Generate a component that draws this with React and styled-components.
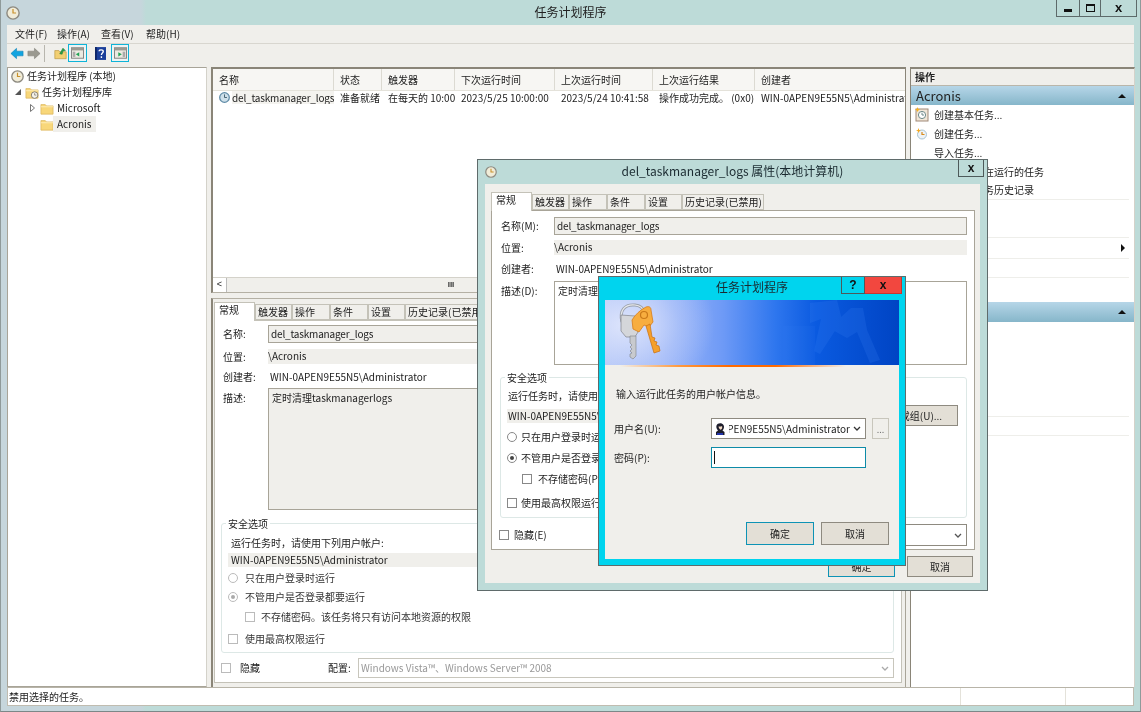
import React from 'react';
import styled, { createGlobalStyle } from 'styled-components';

const Global = createGlobalStyle`
  html, body { margin: 0; padding: 0; background: #bfdad9; }
  * { box-sizing: border-box; }
  #root { width: 1141px; height: 712px; overflow: hidden; }
`;

const Screen = styled.div`
  position: relative;
  width: 1141px;
  height: 712px;
  background: linear-gradient(90deg, #c6d6dc 0, #c6d6dc 140px, #bddbd8 145px, #bddbd8 100%);
  font-family: "Noto Sans CJK SC", "Noto Sans", sans-serif;
  font-size: 10px;
  line-height: 14px;
  color: #222;
  border-left: 1px solid #8f9a9a;
  border-right: 1px solid #8f9a9a;
  border-bottom: 1px solid #7c8888;
  display: flex;
  flex-direction: column;
  padding: 0 6px 5px;
  filter: blur(0.4px);
`;

const MainTitle = styled.div`
  height: 25px;
  margin: 0 -1px;
  display: flex;
  align-items: flex-start;
  position: relative;
`;
const TitleIcon = styled.span`
  display: flex;
  margin: 6px 0 0 0;
`;
const MainTitleText = styled.div`
  position: absolute;
  left: 0;
  right: 0;
  top: 5px;
  text-align: center;
  font-size: 12px;
  color: #222;
`;
const WinBtns = styled.div`
  margin-left: auto;
  display: flex;
  height: 17px;
  margin-right: -2px;
  border: 1px solid #5d6a6a;
  border-top: none;
`;
const WinBtn = styled.div`
  width: ${p => p.$w}px;
  display: flex;
  align-items: center;
  justify-content: center;
  border-left: ${p => (p.$first ? 'none' : '1px solid #5d6a6a')};
  font-weight: 700;
  font-family: "Liberation Sans", sans-serif;
  font-size: 13px;
  color: #111;
`;
const MinGlyph = styled.i`
  display: block;
  width: 8px;
  height: 3px;
  background: #111;
  margin-top: 4px;
`;
const MaxGlyph = styled.i`
  display: block;
  width: 9px;
  height: 8px;
  border: 1px solid #111;
  border-top-width: 2px;
`;

const MenuBar = styled.div`
  height: 19px;
  background: #f0efeb;
  display: flex;
  align-items: center;
  padding-left: 8px;
  border-bottom: 1px solid #d8d6cf;
`;
const MenuItem = styled.span`
  width: ${p => p.$w}px;
  flex: none;
  font-size: 10px;
`;
const Toolbar = styled.div`
  height: 22px;
  background: #f0efeb;
  display: flex;
  align-items: center;
  padding: 0 0 4px 3px;
`;
const ToolSep = styled.i`
  width: 1px;
  height: 17px;
  background: #b8b6ae;
  margin: 0 9px 0 3px;
`;
const ToolBtn = styled.span`
  width: ${p => p.$w || 20}px;
  height: 18px;
  display: flex;
  align-items: center;
  justify-content: center;
  margin-left: ${p => p.$ml || 0}px;
  ${p => p.$on && 'border: 1px solid #0fb4d8; background: #eef3f3;'}
`;

const Workspace = styled.div`
  flex: 1;
  min-height: 0;
  display: flex;
  background: #f0efeb;
  padding-top: 1px;
`;
const TreePane = styled.div`
  width: 200px;
  background: #fff;
  border: 1px solid #a8a498;
  border-right: 1px solid #d4d2ca;
  flex: none;
`;
const TreeRow = styled.div`
  height: 16px;
  display: flex;
  align-items: center;
  padding-left: ${p => p.$indent}px;
  gap: 3px;
`;
const TreeLabel = styled.span`
  ${p => p.$sel && 'background:#f0efeb; padding: 1px 4px; margin-left:-4px;'}
`;
const Expander = styled.span`
  width: 7px;
  display: flex;
  flex: none;
`;
const CenterPane = styled.div`
  width: 695px;
  margin-left: 4px;
  flex: none;
  display: flex;
  flex-direction: column;
`;
const ListPane = styled.div`
  height: 226px;
  flex: none;
  background: #fff;
  border: 2px solid #8a8578;
  border-right: 1px solid #8a8578;
  border-bottom: 1px solid #b4b0a4;
  display: flex;
  flex-direction: column;
  overflow: hidden;
`;
const ListHeader = styled.div`
  display: flex;
  height: 22px;
  flex: none;
  background: #f7f6f3;
  border-bottom: 1px solid #e4e2da;
`;
const ListCell = styled.div`
  width: ${p => p.$w}px;
  flex: none;
  padding-left: ${p => p.$pl ?? 6}px;
  border-right: ${p => (p.$head ? '1px solid #dcdad2' : 'none')};
  white-space: nowrap;
  display: flex;
  align-items: center;
  gap: 2px;
  overflow: hidden;
`;
const TaskName = styled.span`
  letter-spacing: -0.18px;
  background: ${p => p.$bg || 'transparent'};
`;
const ListRow = styled.div`
  display: flex;
  height: 13px;
`;
const ListFill = styled.div`
  flex: 1;
`;
const HScroll = styled.div`
  height: 15px;
  flex: none;
  background: #f7f6f3;
  display: flex;
  align-items: center;
  border-top: 1px solid #d4d2ca;
`;
const ScrollEnd = styled.div`
  width: 14px;
  height: 14px;
  background: #fff;
  border-right: 1px solid #bbb;
  text-align: center;
  font-size: 9px;
  line-height: 13px;
  font-family: "Liberation Sans", sans-serif;
`;
const ScrollThumb = styled.div`
  width: 448px;
  height: 14px;
  background: #f0efeb;
  text-align: center;
  font-size: 8px;
  line-height: 13px;
  color: #333;
  font-family: "Liberation Sans", sans-serif;
  font-weight: 700;
`;
const Splitter = styled.div`
  height: 5px;
  flex: none;
  background: #f0efeb;
`;
const DetailPane = styled.div`
  flex: 1;
  min-height: 0;
  border-left: 2px solid #8a8578;
  border-top: 1px solid #b4b0a4;
  border-right: 1px solid #a8a498;
  background: #f0efeb;
  padding: 3px 3px 4px 1px;
  display: flex;
  flex-direction: column;
`;

const Tabs = styled.div`
  display: flex;
  height: 18px;
  flex: none;
  align-items: flex-end;
  position: relative;
  z-index: 1;
`;
const Tab = styled.div`
  width: ${p => p.$w}px;
  flex: none;
  height: ${p => (p.$on ? 19 : 16)}px;
  margin-bottom: ${p => (p.$on ? -1 : 0)}px;
  padding-left: ${p => (p.$on ? 4 : 2)}px;
  background: ${p => (p.$on ? '#fff' : '#f0efeb')};
  border: 1px solid #c4c2b8;
  border-bottom: ${p => (p.$on ? 'none' : '1px solid #c4c2b8')};
  white-space: nowrap;
  overflow: hidden;
`;
const TabPanel = styled.div`
  flex: 1;
  min-height: 0;
  padding: 4px 7px 0 8px;
  background: #fff;
  border: 1px solid #c4c2b8;
`;
const FieldRow = styled.div`
  display: flex;
  align-items: ${p => (p.$top ? 'flex-start' : 'center')};
  height: ${p => p.$h}px;
  margin-top: ${p => p.$mt || 0}px;
`;
const FieldLabel = styled.div`
  width: ${p => p.$w}px;
  flex: none;
  ${p => p.$pt && `padding-top:${p.$pt}px;`}
`;
const TextInput = styled.div`
  flex: 1;
  align-self: stretch;
  background: #f0efeb;
  border: 1px solid #a8a498;
  padding-left: 2px;
  display: flex;
  align-items: center;
`;
const ReadBox = styled.div`
  flex: 1;
  align-self: stretch;
  background: #f0efeb;
  display: flex;
  align-items: center;
  padding-bottom: 1px;
`;
const PlainValue = styled.div`
  padding-left: 2px;
`;
const MultiBox = styled.div`
  flex: 1;
  align-self: stretch;
  background: ${p => p.$bg || '#f0efeb'};
  border: 1px solid #a8a498;
  padding: 2px 3px;
`;
const Group = styled.div`
  position: relative;
  border: 1px solid #dde8e6;
  border-radius: 3px;
  margin: ${p => p.$mt}px 0 0 ${p => p.$ml}px;
  height: ${p => p.$h}px;
  padding: ${p => p.$pt}px 8px 0 6px;
`;
const Legend = styled.span`
  position: absolute;
  left: 4px;
  top: -7px;
  background: #fff;
  padding: 0 2px;
`;
const GroupLine = styled.div`
  height: 14px;
  margin-top: ${p => p.$mt || 0}px;
  display: flex;
  align-items: center;
  gap: ${p => p.$gap || 6}px;
  padding-left: ${p => p.$pl || 0}px;
  color: ${p => (p.$muted ? '#333' : 'inherit')};
`;
const GrayBand = styled.div`
  height: 14px;
  margin-top: ${p => p.$mt}px;
  background: #f0efeb;
  display: flex;
  align-items: center;
  padding-left: ${p => p.$pl}px;
`;
const Radio = styled.i`
  width: 10px;
  height: 10px;
  border-radius: 50%;
  flex: none;
  border: 1px solid ${p => p.$c || '#bbb'};
  background: #fff;
  display: flex;
  align-items: center;
  justify-content: center;
  &::after {
    content: '';
    display: ${p => (p.$on ? 'block' : 'none')};
    width: 4px;
    height: 4px;
    border-radius: 50%;
    background: ${p => p.$dot || '#aaa'};
  }
`;
const Check = styled.i`
  width: 10px;
  height: 10px;
  flex: none;
  border: 1px solid ${p => p.$c || '#bbb'};
  background: #fff;
`;
const FooterRow = styled.div`
  display: flex;
  align-items: center;
  height: ${p => p.$h}px;
  margin: ${p => p.$mt}px 0 0 ${p => p.$ml}px;
`;
const FooterText = styled.span`
  flex: none;
  width: ${p => p.$w}px;
  margin-left: ${p => p.$ml || 0}px;
  white-space: nowrap;
`;
const Select = styled.div`
  flex: 1;
  height: 100%;
  background: #fff;
  border: 1px solid ${p => p.$c || '#c8c6bc'};
  color: ${p => p.$tc || '#999'};
  display: flex;
  align-items: center;
  padding: 0 4px 0 2px;
  justify-content: space-between;
  overflow: hidden;
  white-space: nowrap;
`;

const ActionsPane = styled.div`
  width: 225px;
  margin-left: 4px;
  flex: none;
  background: #fff;
  border-left: 1px solid #8a8578;
  border-top: 2px solid #8a8578;
  border-right: 1px solid #d4d2ca;
  display: flex;
  flex-direction: column;
`;
const ActionsTitle = styled.div`
  height: 17px;
  background: #f0efeb;
  border-bottom: 1px solid #bab6aa;
  padding: 1px 0 0 4px;
  font-weight: 700;
  flex: none;
`;
const SectionHead = styled.div`
  height: ${p => p.$h}px;
  flex: none;
  margin-top: ${p => p.$mt || 0}px;
  background: linear-gradient(180deg, #b6d6e8, #86b6ca);
  padding: 0 8px 0 5px;
  display: flex;
  align-items: center;
  justify-content: space-between;
  font-size: 13px;
  color: #222;
`;
const ActionRow = styled.div`
  height: ${p => p.$h || 19}px;
  flex: none;
  display: flex;
  align-items: center;
  padding-left: 23px;
  position: relative;
  ${p => p.$sep && 'border-bottom: 1px solid #eeeeea; margin-right: 5px;'}
`;
const ActionIcon = styled.span`
  position: absolute;
  left: 4px;
  top: 2px;
  display: flex;
`;
const RowArrow = styled.i`
  position: absolute;
  right: 4px;
  top: 6px;
  border-left: 4px solid #111;
  border-top: 4px solid transparent;
  border-bottom: 4px solid transparent;
`;
const UpArrow = styled.i`
  border-bottom: 4px solid #111;
  border-left: 4px solid transparent;
  border-right: 4px solid transparent;
`;

const StatusBar = styled.div`
  height: 19px;
  flex: none;
  background: #fff;
  border: 1px solid #c0bcb0;
  border-top: 1px solid #b8b4a8;
  display: flex;
  align-items: center;
`;
const StatusCell = styled.div`
  height: 100%;
  padding-left: 1px;
  width: ${p => p.$w}px;
  flex: ${p => (p.$w ? 'none' : 1)};
  border-right: ${p => (p.$last ? 'none' : '1px solid #e4e2da')};
  display: flex;
  align-items: center;
`;

/* floating windows */
const Dialog = styled.div`
  position: absolute;
  z-index: 2;
  left: ${p => p.$x}px;
  top: ${p => p.$y}px;
  width: ${p => p.$w}px;
  height: ${p => p.$h}px;
  background: ${p => p.$frame};
  border: 1px solid #5f6b6b;
  display: flex;
  flex-direction: column;
  padding: 0 ${p => p.$pad}px ${p => p.$pad}px;
`;
const DialogTitle = styled.div`
  height: ${p => p.$h}px;
  flex: none;
  position: relative;
  display: flex;
  margin: 0 -${p => p.$pad}px;
  padding-left: ${p => p.$il || 0}px;
`;
const DialogTitleText = styled.div`
  position: absolute;
  left: 0;
  right: 0;
  top: ${p => p.$t}px;
  text-align: center;
  font-size: 12px;
  line-height: 16px;
  color: #1a2a30;
`;
const DialogBtns = styled.div`
  margin-left: auto;
  margin-right: ${p => p.$mr}px;
  display: flex;
  height: 17px;
  position: relative;
`;
const DlgBtn = styled.div`
  width: ${p => p.$w}px;
  display: flex;
  align-items: center;
  justify-content: center;
  background: ${p => p.$bg || 'transparent'};
  border: 1px solid ${p => p.$bc || '#4d5a5a'};
  border-top: none;
  border-left: ${p => (p.$nl ? 'none' : `1px solid ${p.$bc || '#4d5a5a'}`)};
  font-family: "Liberation Sans", sans-serif;
  font-weight: 700;
  font-size: 12px;
  color: #111;
`;
const DialogBody = styled.div`
  flex: 1;
  min-height: 0;
  background: #f0efeb;
  display: flex;
  flex-direction: column;
  padding: ${p => p.$pad || 0};
`;
const PropTabPanel = styled.div`
  height: 340px;
  background: #fff;
  border: 1px solid #a8a498;
  padding: 6px 7px 0 9px;
  margin-right: 5px;
  flex: none;
`;
const PushRow = styled.div`
  display: flex;
  justify-content: flex-end;
  gap: ${p => p.$gap}px;
  margin-top: ${p => p.$mt}px;
  padding-right: ${p => p.$pr}px;
`;
const PushBtn = styled.div`
  width: ${p => p.$w}px;
  height: ${p => p.$h}px;
  display: flex;
  align-items: center;
  justify-content: center;
  background: #e3dfd6;
  border: 1px solid ${p => (p.$def ? '#0d93b5' : '#8e8a80')};
  white-space: nowrap;
`;
const ChangeUserBtn = styled(PushBtn)`
  position: absolute;
  right: 8px;
  top: 27px;
`;
const Banner = styled.div`
  height: 65px;
  flex: none;
  position: relative;
  overflow: hidden;
  background:
    radial-gradient(ellipse 90px 70px at 20px 25px, rgba(226,232,252,0.9) 0%, rgba(200,214,250,0.4) 60%, rgba(160,185,250,0) 100%),
    linear-gradient(90deg, #b4c6f7 0%, #a2b9f8 18%, #6e9af6 40%, #2e76ee 58%, #0a5ae0 72%, #0044c4 100%);
`;
const BannerArt = styled.svg`
  position: absolute;
  left: 0;
  top: 0;
`;
const OrangeLine = styled.div`
  height: 2px;
  flex: none;
  background: linear-gradient(90deg, #f0efeb 5%, #ff9a40 25%, #ff6a00 42%, #ff6a00 58%, #f0efeb 82%);
`;
const CredText = styled.div`
  margin: 20px 0 0 11px;
  height: 14px;
`;
const CredRow = styled.div`
  display: flex;
  align-items: center;
  margin: ${p => p.$mt}px 0 0 9px;
  height: 21px;
`;
const CredLabel = styled.div`
  width: 97px;
  flex: none;
`;
const Combo = styled.div`
  width: 155px;
  height: 21px;
  background: #fff;
  border: 1px solid #8e8a80;
  display: flex;
  align-items: center;
  padding-left: 2px;
  gap: 3px;
  overflow: hidden;
`;
const ComboClip = styled.div`
  width: 121px;
  flex: none;
  overflow: hidden;
  display: flex;
  justify-content: flex-end;
  white-space: nowrap;
  color: #222;
`;
const Ellipsis = styled.div`
  width: 17px;
  height: 21px;
  margin-left: 6px;
  border: 1px solid #c8c6bc;
  background: #f0efeb;
  text-align: center;
  line-height: 22px;
  color: #777;
  font-size: 9px;
`;
const PasswordInput = styled.div`
  width: 155px;
  height: 21px;
  background: #fff;
  border: 1px solid #0d8ba8;
  display: flex;
  align-items: center;
  padding-left: 2px;
`;
const Caret = styled.i`
  width: 1px;
  height: 13px;
  background: #111;
`;
const ToolGap = styled.span`
  width: 3px;
`;

const Clock = ({ s = 14, ring = '#8d8a80' }) => (
  <svg width={s} height={s} viewBox="0 0 16 16">
    <circle cx="8" cy="8" r="7" fill="#f1ecd8" stroke={ring} strokeWidth="1.6" />
    <path d="M8 3.5V8h3.5" fill="none" stroke="#c9902a" strokeWidth="1.4" />
  </svg>
);
const BlueClock = () => (
  <svg width="11" height="11" viewBox="0 0 16 16" style={{ flex: 'none' }}>
    <circle cx="8" cy="8" r="7" fill="#cfe0ea" stroke="#5e8aa6" strokeWidth="1.8" />
    <path d="M8 3.5V8h3.5" fill="none" stroke="#44606f" strokeWidth="1.4" />
  </svg>
);
const Folder = ({ clock }) => (
  <svg width="14" height="13" viewBox="0 0 16 15">
    <path d="M1 3h5l1.5 1.5H15V14H1z" fill="#f8d77a" stroke="#d9b35c" strokeWidth="0.8" />
    <path d="M1 5.5h14" stroke="#fff0bf" strokeWidth="1" />
    {clock && <circle cx="11" cy="10.5" r="3.8" fill="#f4f2ea" stroke="#77736a" strokeWidth="1" />}
    {clock && <path d="M11 8.3v2.2h2" stroke="#77736a" strokeWidth="0.8" fill="none" />}
  </svg>
);
const BackArrow = () => (
  <svg width="14" height="13" viewBox="0 0 15 13">
    <path d="M1 6.5 7 1v3h7v5H7v3z" fill="#12a4e0" stroke="#0c7fb4" strokeWidth="0.6" />
  </svg>
);
const FwdArrow = () => (
  <svg width="14" height="13" viewBox="0 0 15 13">
    <path d="M14 6.5 8 1v3H1v5h7v3z" fill="#9a9990" stroke="#7d7c74" strokeWidth="0.6" />
  </svg>
);
const UpFolder = () => (
  <svg width="13" height="14" viewBox="0 0 16 16">
    <path d="M1 5h5l1 1.5h8V15H1z" fill="#f2cf72" stroke="#b89440" strokeWidth="0.8" />
    <path d="M7 9 11 2l3 3-3 .5-1 4z" fill="#28a24a" stroke="#17722f" strokeWidth="0.6" />
  </svg>
);
const PaneIcon = ({ right }) => (
  <svg width="13" height="12" viewBox="0 0 15 13">
    <rect x="0.5" y="0.5" width="14" height="12" fill="#eceae2" stroke="#777" />
    <rect x="0.5" y="0.5" width="14" height="3" fill="#9b9a92" />
    <rect x={right ? 10 : 2} y="5" width="3" height="6" fill="#aaa" />
    <path d={right ? 'M5 5.5 9 8 5 10.5z' : 'M9.5 5.5 5.5 8l4 2.5z'} fill="#23a455" />
  </svg>
);
const HelpBook = () => (
  <svg width="11" height="13" viewBox="0 0 12 14">
    <rect width="12" height="14" fill="#1b3f9a" />
    <rect width="2" height="14" fill="#0d2566" />
    <path d="M4.500 4.500C4.500 2.500 9 2.500 9 4.800 9 6.500 7 6.500 7 8.500M7 10v2" fill="none" stroke="#fff" strokeWidth="1.500" />
  </svg>
);
const NewBasic = () => (
  <svg width="14" height="15" viewBox="0 0 14 15">
    <rect x="1" y="2" width="12" height="12" fill="#f1e6d8" stroke="#a08a78" />
    <circle cx="7" cy="8" r="3.6" fill="#fff" stroke="#6f8a8a" />
    <path d="M7 5.7V8h2" stroke="#6f8a8a" fill="none" />
    <path d="M2.500 0 3.300 2 5 2.600 3.300 3.400 2.500 5 1.800 3.400 0 2.600 1.800 2z" fill="#f6b11e" />
  </svg>
);
const NewTask = () => (
  <svg width="13" height="14" viewBox="0 0 13 14">
    <circle cx="7" cy="8.500" r="4.500" fill="#eef3f6" stroke="#a8c4d4" />
    <path d="M7 6v2.500h2.500" stroke="#d98a18" fill="none" strokeWidth="1.200" />
    <path d="M3.500 2 4.200 4 6 4.600 4.200 5.200 3.500 7 2.800 5.200 1 4.600 2.800 4z" fill="#f6a91e" />
  </svg>
);
const UserGlyph = () => (
  <svg width="12" height="14" viewBox="0 0 12 14" style={{ flex: 'none' }}>
    <path d="M2 13V10l2-1.500C2.500 7 2 5 2.500 3.500 3.500.8 8 .5 9.500 3c1 1.600.5 4-1 5.500l2 1.500V13z" fill="#1d1d2b" />
    <path d="M4.500 4.500c1.500.3 3 0 3.500-.6.5 1.500.2 3-1.200 3.800-1.300-.4-2.100-1.800-2.300-3.200z" fill="#f3ddc8" />
    <rect x="3" y="11" width="6" height="2" fill="#2233aa" />
  </svg>
);
const Chevron = ({ c = '#555' }) => (
  <svg width="8" height="5" viewBox="0 0 8 5"><path d="M1 1l3 3 3-3" fill="none" stroke={c} strokeWidth="1.300" /></svg>
);
const KeysArt = () => (
  <BannerArt width="295" height="65" viewBox="0 0 295 65">
    <g fill="#3b82f4" opacity="0.2">
      <path d="M205 3 232 0l5 20-22 34-6-3 7-32-11 4z" />
      <path d="M224 28 246 8h12l4 22 13 30-10 3-13-31-10 6z" />
      <path d="M178 26h32v39h-32z" opacity="0.45" />
    </g>
    <g>
      <path d="M17 22C14 10 20 4 30 5c5 .5 8 3 9 7" fill="none" stroke="#9aa0aa" strokeWidth="3" />
      <path d="M17 22C14 10 20 4 30 5c5 .5 8 3 9 7" fill="none" stroke="#e6e8ec" strokeWidth="1.200" />
      <path d="M16 15l14 1 3 16-3 5h-9l-5-6z" fill="#d4d6da" stroke="#808389" strokeWidth="0.700" />
      <path d="M25 36h6v20l-3 3-3-2v-3l2-1-2-2 2-2-2-2 2-2-2-2z" fill="#c8cace" stroke="#7c7f84" strokeWidth="0.600" />
      <path d="M27 20c3-5 8-10 14-13 3-1 5 0 5 3l2 12-4 5-5-2-5 7-6-3z" fill="#f7ad3f" stroke="#d87c18" strokeWidth="0.800" />
      <circle cx="39" cy="15" r="3.500" fill="none" stroke="#c97818" strokeWidth="1.200" />
      <path d="M41 26l8 27 6-2-1-5-3-1 1-3-3-1 1-3-3-1-2-13z" fill="#f5a02a" stroke="#c86e10" strokeWidth="0.700" />
    </g>
  </BannerArt>
);

const SecurityLines = ({ hint, check, muted, c, dot, gaps, bandMt, bandPl, firstPl, radioGap, checkPl }) => (
  <>
    <GroupLine $pl={firstPl} $gap={6}>运行任务时，请使用下列用户帐户:</GroupLine>
    <GrayBand $mt={bandMt} $pl={bandPl}>WIN-0APEN9E55N5\Administrator</GrayBand>
    <GroupLine $mt={gaps[0]} $gap={radioGap} $muted={muted}><Radio $c={c} />只在用户登录时运行</GroupLine>
    <GroupLine $mt={gaps[1]} $gap={radioGap} $muted={muted}><Radio $c={c} $on $dot={dot} />不管用户是否登录都要运行</GroupLine>
    <GroupLine $mt={gaps[2]} $pl={checkPl} $muted={muted}><Check $c={c} />{hint}</GroupLine>
    <GroupLine $mt={gaps[3]} $gap={radioGap} $muted={muted}><Check $c={c} />{check}</GroupLine>
  </>
);

const TabStrip = () => (
  <Tabs>
    <Tab $on $w={41}>常规</Tab>
    <Tab $w={37}>触发器</Tab>
    <Tab $w={38}>操作</Tab>
    <Tab $w={38}>条件</Tab>
    <Tab $w={37}>设置</Tab>
    <Tab $w={82}>历史记录(已禁用)</Tab>
  </Tabs>
);

const actionsA = [
  { t: '创建基本任务...', i: <NewBasic /> },
  { t: '创建任务...', i: <NewTask /> },
  { t: '导入任务...' },
  { t: '显示所有正在运行的任务' },
  { t: '启用所有任务历史记录', sep: true },
  { t: '新文件夹...' },
  { t: '删除文件夹', sep: true },
  { t: '查看', arrow: true, sep: true, h: 21 },
  { t: '刷新', sep: true },
  { t: '帮助' },
];
const actionsB = [
  { t: '运行' }, { t: '结束' }, { t: '禁用' }, { t: '导出...' },
  { t: '属性', sep: true }, { t: '删除', sep: true }, { t: '帮助' },
];

export default function App() {
  return (
    <>
      <Global />
      <Screen>
        <MainTitle>
          <TitleIcon><Clock s={14} /></TitleIcon>
          <MainTitleText>任务计划程序</MainTitleText>
          <WinBtns>
            <WinBtn $first $w={22}><MinGlyph /></WinBtn>
            <WinBtn $w={21}><MaxGlyph /></WinBtn>
            <WinBtn $w={36}>x</WinBtn>
          </WinBtns>
        </MainTitle>
        <MenuBar>
          <MenuItem $w={42}>文件(F)</MenuItem>
          <MenuItem $w={44}>操作(A)</MenuItem>
          <MenuItem $w={45}>查看(V)</MenuItem>
          <MenuItem $w={40}>帮助(H)</MenuItem>
        </MenuBar>
        <Toolbar>
          <BackArrow />
          <ToolGap />
          <FwdArrow />
          <ToolSep />
          <ToolBtn $w={13}><UpFolder /></ToolBtn>
          <ToolBtn $on $w={19} $ml={1}><PaneIcon /></ToolBtn>
          <ToolBtn $w={11} $ml={8}><HelpBook /></ToolBtn>
          <ToolBtn $on $w={18} $ml={5}><PaneIcon right /></ToolBtn>
        </Toolbar>
        <Workspace>
          <TreePane>
            <TreeRow $indent={3}><Clock s={13} /><span>任务计划程序 (本地)</span></TreeRow>
            <TreeRow $indent={7}>
              <Expander><svg width="6" height="6" viewBox="0 0 6 6"><path d="M6 0v6H0z" fill="#555" /></svg></Expander>
              <Folder clock /><span>任务计划程序库</span>
            </TreeRow>
            <TreeRow $indent={22}>
              <Expander><svg width="5" height="8" viewBox="0 0 5 8"><path d="M.5.500 4.500 4 .5 7.500z" fill="#fff" stroke="#777" /></svg></Expander>
              <Folder /><span>Microsoft</span>
            </TreeRow>
            <TreeRow $indent={32}><Folder /><TreeLabel $sel>Acronis</TreeLabel></TreeRow>
          </TreePane>
          <CenterPane>
            <ListPane>
              <ListHeader>
                <ListCell $head $w={121}>名称</ListCell>
                <ListCell $head $w={48}>状态</ListCell>
                <ListCell $head $w={73}>触发器</ListCell>
                <ListCell $head $w={100}>下次运行时间</ListCell>
                <ListCell $head $w={98}>上次运行时间</ListCell>
                <ListCell $head $w={102}>上次运行结果</ListCell>
                <ListCell $w={150}>创建者</ListCell>
              </ListHeader>
              <ListRow>
                <ListCell $w={121}><BlueClock /><TaskName $bg="#f4f3ef">del_taskmanager_logs</TaskName></ListCell>
                <ListCell $w={48}>准备就绪</ListCell>
                <ListCell $w={73}>在每天的 10:00</ListCell>
                <ListCell $w={100}>2023/5/25 10:00:00</ListCell>
                <ListCell $w={98}>2023/5/24 10:41:58</ListCell>
                <ListCell $w={102}>操作成功完成。 (0x0)</ListCell>
                <ListCell $w={150}>WIN-0APEN9E55N5\Administrator</ListCell>
              </ListRow>
              <ListFill />
              <HScroll>
                <ScrollEnd>&lt;</ScrollEnd>
                <ScrollThumb>III</ScrollThumb>
              </HScroll>
            </ListPane>
            <Splitter />
            <DetailPane>
              <TabStrip />
              <TabPanel>
                <FieldRow $h={18}>
                  <FieldLabel $w={45}>名称:</FieldLabel>
                  <TextInput><TaskName>del_taskmanager_logs</TaskName></TextInput>
                </FieldRow>
                <FieldRow $h={15} $mt={6}>
                  <FieldLabel $w={45}>位置:</FieldLabel>
                  <ReadBox>\Acronis</ReadBox>
                </FieldRow>
                <FieldRow $h={14} $mt={6}>
                  <FieldLabel $w={45}>创建者:</FieldLabel>
                  <PlainValue>WIN-0APEN9E55N5\Administrator</PlainValue>
                </FieldRow>
                <FieldRow $h={122} $mt={4} $top>
                  <FieldLabel $w={45} $pt={3}>描述:</FieldLabel>
                  <MultiBox>定时清理taskmanagerlogs</MultiBox>
                </FieldRow>
                <Group $mt={13} $ml={-2} $h={130} $pt={12}>
                  <Legend>安全选项</Legend>
                  <SecurityLines
                    muted
                    firstPl={3}
                    bandMt={3}
                    bandPl={3}
                    radioGap={7}
                    checkPl={17}
                    gaps={[4, 5, 6, 8]}
                    hint="不存储密码。该任务将只有访问本地资源的权限"
                    check="使用最高权限运行"
                  />
                </Group>
                <FooterRow $h={20} $mt={5} $ml={-2}>
                  <Check />
                  <FooterText $ml={9} $w={88}>隐藏</FooterText>
                  <FooterText $w={30}>配置:</FooterText>
                  <Select>Windows Vista™、Windows Server™ 2008<Chevron c="#aaa" /></Select>
                </FooterRow>
              </TabPanel>
            </DetailPane>
          </CenterPane>
          <ActionsPane>
            <ActionsTitle>操作</ActionsTitle>
            <SectionHead $h={19}>Acronis<UpArrow /></SectionHead>
            {actionsA.map(a => (
              <ActionRow key={a.t} $sep={a.sep} $h={a.h}>
                {a.i && <ActionIcon>{a.i}</ActionIcon>}
                {a.t}
                {a.arrow && <RowArrow />}
              </ActionRow>
            ))}
            <SectionHead $h={20} $mt={5}>所选项<UpArrow /></SectionHead>
            {actionsB.map(a => (
              <ActionRow key={a.t} $sep={a.sep}>{a.t}</ActionRow>
            ))}
          </ActionsPane>
        </Workspace>
        <StatusBar>
          <StatusCell $w={953}>禁用选择的任务。</StatusCell>
          <StatusCell $w={105} />
          <StatusCell $last />
        </StatusBar>

        <Dialog $x={476} $y={159} $w={511} $h={432} $pad={7} $frame="#bddbd8">
          <DialogTitle $h={24} $pad={7} $il={7}>
            <TitleIcon><Clock s={12} /></TitleIcon>
            <DialogTitleText $t={3}>del_taskmanager_logs 属性(本地计算机)</DialogTitleText>
            <DialogBtns $mr={3}>
              <DlgBtn $w={26}>x</DlgBtn>
            </DialogBtns>
          </DialogTitle>
          <DialogBody $pad="8px 0 0 6px">
            <TabStrip />
            <PropTabPanel>
              <FieldRow $h={18}>
                <FieldLabel $w={53}>名称(M):</FieldLabel>
                <TextInput><TaskName>del_taskmanager_logs</TaskName></TextInput>
              </FieldRow>
              <FieldRow $h={15} $mt={5}>
                <FieldLabel $w={53}>位置:</FieldLabel>
                <ReadBox>\Acronis</ReadBox>
              </FieldRow>
              <FieldRow $h={14} $mt={7}>
                <FieldLabel $w={53}>创建者:</FieldLabel>
                <PlainValue>WIN-0APEN9E55N5\Administrator</PlainValue>
              </FieldRow>
              <FieldRow $h={84} $mt={5} $top>
                <FieldLabel $w={53} $pt={3}>描述(D):</FieldLabel>
                <MultiBox $bg="#fff">定时清理taskmanagerlogs</MultiBox>
              </FieldRow>
              <Group $mt={12} $ml={-1} $h={141} $pt={11}>
                <Legend>安全选项</Legend>
                <SecurityLines
                  firstPl={1}
                  bandMt={6}
                  bandPl={1}
                  radioGap={4}
                  checkPl={15}
                  gaps={[7, 7, 7, 10]}
                  c="#888"
                  dot="#444"
                  hint="不存储密码(P)。该任务将只有访问本地资源的权限"
                  check="使用最高权限运行(I)"
                />
                <ChangeUserBtn $w={114} $h={21}>更改用户或组(U)...</ChangeUserBtn>
              </Group>
              <FooterRow $h={22} $mt={6} $ml={-2}>
                <Check $c="#888" />
                <FooterText $ml={5} $w={150}>隐藏(E)</FooterText>
                <Select $c="#8e8a80" $tc="#222"><span /><Chevron /></Select>
              </FooterRow>
            </PropTabPanel>
            <PushRow $mt={6} $pr={7} $gap={12}>
              <PushBtn $def $w={67} $h={21}>确定</PushBtn>
              <PushBtn $w={66} $h={21}>取消</PushBtn>
            </PushRow>
          </DialogBody>
        </Dialog>

        <Dialog $x={597} $y={276} $w={308} $h={290} $pad={6} $frame="#00d4ee">
          <DialogTitle $h={23} $pad={6}>
            <DialogTitleText $t={2}>任务计划程序</DialogTitleText>
            <DialogBtns $mr={3}>
              <DlgBtn $w={24}>?</DlgBtn>
              <DlgBtn $w={37} $nl $bg="#f2473f" $bc="#c8342e">x</DlgBtn>
            </DialogBtns>
          </DialogTitle>
          <DialogBody>
            <Banner><KeysArt /></Banner>
            <OrangeLine />
            <CredText>输入运行此任务的用户帐户信息。</CredText>
            <CredRow $mt={17}>
              <CredLabel>用户名(U):</CredLabel>
              <Combo>
                <UserGlyph />
                <ComboClip>WIN-0APEN9E55N5\Administrator</ComboClip>
                <Chevron c="#333" />
              </Combo>
              <Ellipsis>...</Ellipsis>
            </CredRow>
            <CredRow $mt={8}>
              <CredLabel>密码(P):</CredLabel>
              <PasswordInput><Caret /></PasswordInput>
            </CredRow>
            <PushRow $mt={54} $pr={10} $gap={7}>
              <PushBtn $def $w={68} $h={23}>确定</PushBtn>
              <PushBtn $w={68} $h={23}>取消</PushBtn>
            </PushRow>
          </DialogBody>
        </Dialog>
      </Screen>
    </>
  );
}
